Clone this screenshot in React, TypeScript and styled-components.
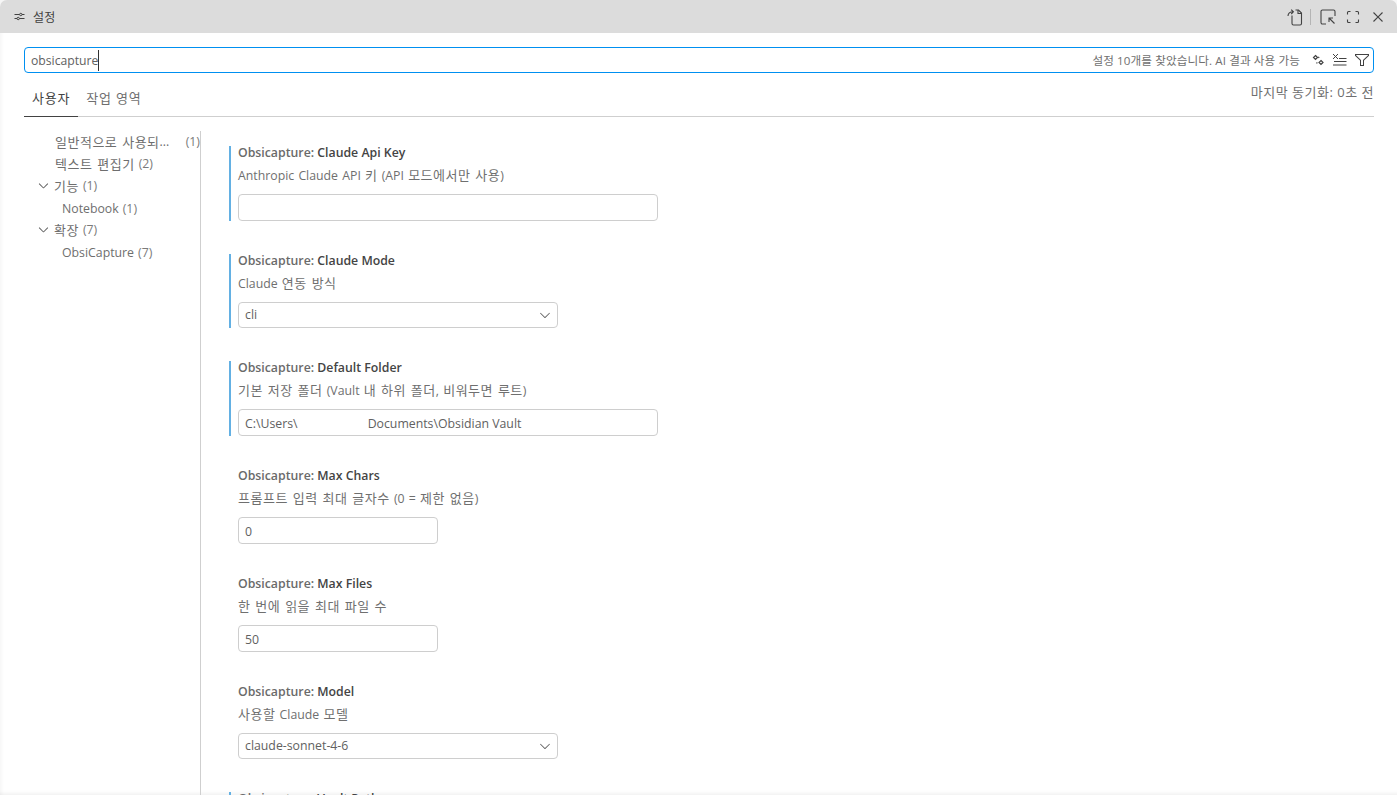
import React from "react";
import styled, { createGlobalStyle } from "styled-components";
import { VscClose, VscChevronDown, VscFilter } from "react-icons/vsc";

const GlobalStyle = createGlobalStyle`
  html, body {
    margin: 0;
    height: 795px;
    overflow: hidden;
    background: #fff;
    font-family: "Open Sans", "Noto Sans CJK KR", sans-serif;
    font-size: 13px;
    color: #616161;
  }
`;

const Frame = styled.div`
  height: 795px;
  overflow: hidden;
  display: flex;
  flex-direction: column;
  background: #f6f6f6;
`;

const TitleBar = styled.header`
  flex: none;
  height: 33px;
  display: flex;
  align-items: center;
  padding: 0 10px 0 14px;
  background: #dcdcdc;
  border-radius: 7px 7px 0 0;
  color: #424242;
  font-size: 12px;
`;

const TitleText = styled.span`
  margin-left: 8px;
  flex: 1;
  letter-spacing: 0.3px;
`;

const TitleActions = styled.div`
  display: flex;
  align-items: center;
  color: #424242;
`;

const Separator = styled.span`
  width: 1px;
  height: 16px;
  background: #b4b4b4;
  margin: 0 9px 0 7px;
`;

const ActionIcon = styled.span<{ $gap?: number }>`
  display: inline-flex;
  margin-left: ${({ $gap }) => $gap ?? 0}px;
`;

const Body = styled.main`
  flex: 1;
  min-height: 0;
  padding: 14px 23px 0 24px;
  background: #fff;
  box-shadow: inset 0 -5px 4px -4px rgba(0, 0, 0, 0.08), inset 5px 0 4px -4px rgba(0, 0, 0, 0.05);
  display: flex;
  flex-direction: column;
`;

const SearchBox = styled.div`
  flex: none;
  height: 26px;
  box-sizing: border-box;
  border: 1px solid #0090f1;
  border-radius: 4px;
  display: flex;
  align-items: center;
  padding: 0 3px 0 6px;
`;

const SearchText = styled.span`
  font-size: 12.2px;
  color: #616161;
`;

const Caret = styled.span`
  display: inline-block;
  width: 1px;
  height: 21px;
  background: #333;
  margin-right: auto;
`;

const SearchResult = styled.span`
  font-size: 11.6px;
  letter-spacing: 0.1px;
  color: #6f6f6f;
  margin-right: 12px;
`;

const SearchIcons = styled.div`
  display: flex;
  align-items: center;
  gap: 7px;
  color: #424242;
`;

const TabRow = styled.div`
  flex: none;
  height: 44px;
  box-sizing: border-box;
  border-bottom: 1px solid #cfcfcf;
  display: flex;
  justify-content: space-between;
`;

const Tabs = styled.div`
  display: flex;
  align-items: flex-end;
`;

const Tab = styled.div<{ $active?: boolean }>`
  box-sizing: border-box;
  height: 32px;
  padding: 0 8px;
  line-height: 27px;
  font-size: 13px;
  letter-spacing: 0.8px;
  margin-bottom: -1px;
  color: ${({ $active }) => ($active ? "#424242" : "#6f6f6f")};
  border-bottom: ${({ $active }) => ($active ? "1px solid #424242" : "none")};
`;

const SyncText = styled.div`
  font-size: 13px;
  letter-spacing: 0.5px;
  color: #6f6f6f;
  line-height: 18px;
  margin-top: 10px;
`;

const Columns = styled.div`
  flex: 1;
  min-height: 0;
  display: flex;
  margin-top: 14px;
`;

const Tree = styled.nav`
  flex: none;
  width: 177px;
  box-sizing: border-box;
  border-right: 1px solid #cfcfcf;
`;

const Ko = styled.span`
  font-size: 13px;
  letter-spacing: 0.5px;
  word-spacing: 1px;
`;

const TreeRow = styled.div<{ $indent: number }>`
  height: 22px;
  box-sizing: border-box;
  display: flex;
  align-items: center;
  padding-left: ${({ $indent }) => $indent}px;
  font-size: 12.3px;
  color: #6e6e6e;
  white-space: pre;

  &:has(${Ko}) {
    padding-bottom: 2px;
  }
`;

const TreeChevron = styled.span`
  display: inline-flex;
  width: 18px;
  margin-left: -1px;
  color: #555;
`;

const TreeCount = styled.span<{ $right?: boolean }>`
  margin-left: ${({ $right }) => ($right ? "auto" : "4px")};
  color: #7a7a7a;
  font-size: 12.3px;
`;

const List = styled.section`
  flex: 1;
  padding: 15px 0 0 28px;
`;

const Setting = styled.article<{ $modified?: boolean }>`
  box-sizing: border-box;
  margin-bottom: 33px;
  padding-left: 7px;
  border-left: 2px solid ${({ $modified }) => ($modified ? "#63b0e3" : "transparent")};
`;

const SettingTitle = styled.div`
  height: 14px;
  line-height: 14px;
  font-size: 12.3px;
  font-weight: 600;
  color: #6a6a6a;
`;

const SettingName = styled.span`
  color: #444;
`;

const SettingDesc = styled.div`
  margin-top: 6px;
  height: 18px;
  line-height: 18px;
  font-size: 12.3px;
  word-spacing: 1px;
  color: #6f6f6f;
  white-space: pre;
`;

const Field = styled.div<{ $width: number }>`
  margin-top: 10px;
  width: ${({ $width }) => $width}px;
  height: 27px;
  box-sizing: border-box;
  border: 1px solid #cecece;
  border-radius: 4px;
  padding: 1px 6px 0;
  display: flex;
  align-items: center;
  font-size: 12.3px;
  color: #616161;
`;

const SelectField = styled(Field)`
  height: 26px;
  padding: 0 4px 1px 6px;
  justify-content: space-between;
`;

const Redacted = styled.span`
  display: inline-block;
  width: 70px;
`;

// Hangul is set a little wider than the Latin around it
const mixed = (text: string) =>
  text
    .split(/([가-힣][가-힣 ]*[가-힣]|[가-힣])/)
    .map((part, i) => (/[가-힣]/.test(part) ? <Ko key={i}>{part}</Ko> : part));

const SlidersIcon = () => (
  <svg width="11" height="11" viewBox="0 0 11 11" fill="none" stroke="currentColor" strokeWidth="1">
    <path d="M0.5 3.5H5.5M8 3.5H10.5M0.5 7.5H3M5.5 7.5H10.5" />
    <circle cx="6.8" cy="3.5" r="1.2" />
    <circle cx="4.2" cy="7.5" r="1.2" />
  </svg>
);

const FileArrowIcon = () => (
  <svg width="16" height="18" viewBox="0 0 16 18" fill="none" stroke="currentColor" strokeWidth="1.1">
    <path d="M5 7.5V15.5C5 16.4 5.6 17 6.5 17H13C13.9 17 14.5 16.4 14.5 15.5V5L11.5 2H8.5" />
    <path d="M11 2V5.5H14.5" />
    <path d="M1 8C1 5.2 2.8 3.8 6.2 3.8M4.2 1.6L6.4 3.8L4.2 6" />
  </svg>
);

const WindowArrowIcon = () => (
  <svg width="16" height="16" viewBox="0 0 16 16" fill="none" stroke="currentColor" strokeWidth="1.1">
    <path d="M6 15H2.5C1.6 15 1 14.4 1 13.5V2.5C1 1.6 1.6 1 2.5 1H13.5C14.4 1 15 1.6 15 2.5V7" />
    <path d="M14.5 14.5L9 9M9 13V9H13" />
  </svg>
);

const CornersIcon = () => (
  <svg width="14" height="14" viewBox="0 0 14 14" fill="none" stroke="currentColor" strokeWidth="1.1">
    <path d="M1.5 4.5V2.5C1.5 1.9 1.9 1.5 2.5 1.5H4.5" />
    <path d="M9.5 1.5H11.5C12.1 1.5 12.5 1.9 12.5 2.5V4.5" />
    <path d="M12.5 9.5V11.5C12.5 12.1 12.1 12.5 11.5 12.5H9.5" />
    <path d="M4.5 12.5H2.5C1.9 12.5 1.5 12.1 1.5 11.5V9.5" />
  </svg>
);

const SparkleIcon = () => (
  <svg width="13" height="13" viewBox="0 0 13 13" fill="none" stroke="currentColor" strokeWidth="1.2">
    <path d="M3.5 1.5L5.5 3.5L3.5 5.5L1.5 3.5Z" />
    <path d="M9 6.5L11 8.5L9 10.5L7 8.5Z" />
    <path d="M6.2 2.8L7.2 3.8" />
    <path d="M4.5 8.5L5.3 9.3" />
  </svg>
);

const ClearListIcon = () => (
  <svg width="15" height="14" viewBox="0 0 15 14" fill="none" stroke="currentColor" strokeWidth="1">
    <path d="M1 1L6 6M6 1L1 6" />
    <path d="M7 5.5H14.5M2 8.5H14.5M1 12H14.5" />
  </svg>
);

type SettingRow = {
  name: string;
  desc: string;
  modified?: boolean;
  kind: "text" | "select" | "number";
  value?: React.ReactNode;
};

const settings: SettingRow[] = [
  { name: "Claude Api Key", desc: "Anthropic Claude API 키 (API 모드에서만 사용)", modified: true, kind: "text" },
  { name: "Claude Mode", desc: "Claude 연동 방식", modified: true, kind: "select", value: "cli" },
  {
    name: "Default Folder",
    desc: "기본 저장 폴더 (Vault 내 하위 폴더, 비워두면 루트)",
    modified: true,
    kind: "text",
    value: (
      <>
        C:\Users\<Redacted />Documents\Obsidian Vault
      </>
    ),
  },
  { name: "Max Chars", desc: "프롬프트 입력 최대 글자수 (0 = 제한 없음)", kind: "number", value: "0" },
  { name: "Max Files", desc: "한 번에 읽을 최대 파일 수", kind: "number", value: "50" },
  { name: "Model", desc: "사용할 Claude 모델", kind: "select", value: "claude-sonnet-4-6" },
  { name: "Vault Path", desc: "", modified: true, kind: "text" },
];

const App = () => (
  <>
    <GlobalStyle />
    <Frame>
      <TitleBar>
        <SlidersIcon />
        <TitleText>설정</TitleText>
        <TitleActions>
          <FileArrowIcon />
          <Separator />
          <WindowArrowIcon />
          <ActionIcon $gap={10}>
            <CornersIcon />
          </ActionIcon>
          <ActionIcon $gap={9}>
            <VscClose size={18} />
          </ActionIcon>
        </TitleActions>
      </TitleBar>
      <Body>
        <SearchBox>
          <SearchText>obsicapture</SearchText>
          <Caret />
          <SearchResult>설정 10개를 찾았습니다. AI 결과 사용 가능</SearchResult>
          <SearchIcons>
            <SparkleIcon />
            <ClearListIcon />
            <VscFilter size={16} />
          </SearchIcons>
        </SearchBox>
        <TabRow>
          <Tabs>
            <Tab $active>사용자</Tab>
            <Tab>작업 영역</Tab>
          </Tabs>
          <SyncText>마지막 동기화: 0초 전</SyncText>
        </TabRow>
        <Columns>
          <Tree>
            <TreeRow $indent={31}>
              <Ko>일반적으로 사용되</Ko>...
              <TreeCount $right>(1)</TreeCount>
            </TreeRow>
            <TreeRow $indent={31}>
              <Ko>텍스트 편집기</Ko>
              <TreeCount>(2)</TreeCount>
            </TreeRow>
            <TreeRow $indent={13}>
              <TreeChevron>
                <VscChevronDown size={15} />
              </TreeChevron>
              <Ko>기능</Ko>
              <TreeCount>(1)</TreeCount>
            </TreeRow>
            <TreeRow $indent={38}>
              Notebook<TreeCount>(1)</TreeCount>
            </TreeRow>
            <TreeRow $indent={13}>
              <TreeChevron>
                <VscChevronDown size={15} />
              </TreeChevron>
              <Ko>확장</Ko>
              <TreeCount>(7)</TreeCount>
            </TreeRow>
            <TreeRow $indent={38}>
              ObsiCapture<TreeCount>(7)</TreeCount>
            </TreeRow>
          </Tree>
          <List>
            {settings.map((s) => (
              <Setting key={s.name} $modified={s.modified}>
                <SettingTitle>
                  Obsicapture: <SettingName>{s.name}</SettingName>
                </SettingTitle>
                <SettingDesc>{mixed(s.desc)}</SettingDesc>
                {s.kind === "select" ? (
                  <SelectField $width={320}>
                    {s.value}
                    <VscChevronDown size={16} />
                  </SelectField>
                ) : (
                  <Field $width={s.kind === "number" ? 200 : 420}>{s.value}</Field>
                )}
              </Setting>
            ))}
          </List>
        </Columns>
      </Body>
    </Frame>
  </>
);

export default App;
